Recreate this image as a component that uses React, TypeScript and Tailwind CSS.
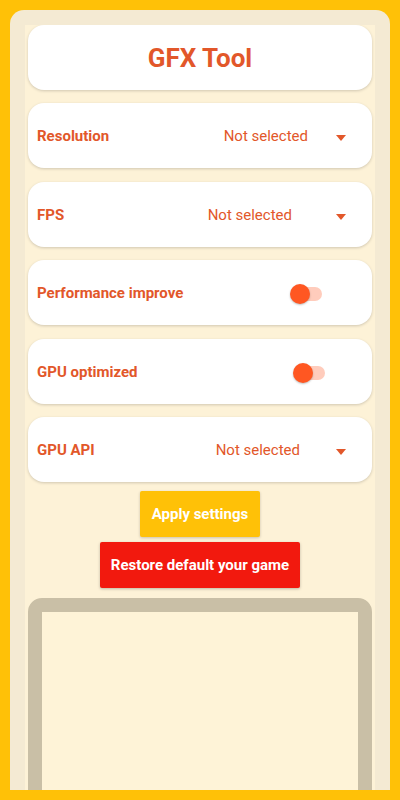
const font = { fontFamily: "Roboto, 'Noto Sans', sans-serif" };

const Arrow = () => (
  <svg width="10" height="6" viewBox="0 0 10 6" className="shrink-0 mt-[2px]">
    <path d="M0 0 L10 0 L5 6 Z" fill="#E2572A" />
  </svg>
);

const SelectCard = ({ label, valueGap, className }: { label: string; valueGap: string; className: string }) => (
  <div className={`h-[65px] shrink-0 bg-white rounded-[16px] shadow-[0_1px_3px_rgba(0,0,0,0.18)] flex items-center pl-[9px] pr-[26px] pt-[2px] ${className}`}>
    <span className="text-[15px] font-bold text-[#E2572A]">{label}</span>
    <span className="flex-1" />
    <span className={`text-[15px] text-[#E2572A] ${valueGap}`}>Not selected</span>
    <Arrow />
  </div>
);

const SwitchCard = ({ label, knobLeft, className }: { label: string; knobLeft: string; className: string }) => (
  <div className={`h-[65px] shrink-0 bg-white rounded-[16px] shadow-[0_1px_3px_rgba(0,0,0,0.18)] flex items-center pl-[9px] pt-[2px] ${className}`}>
    <span className="text-[15px] font-bold text-[#E2572A]">{label}</span>
    <span className="flex-1" />
    <div className={`relative w-[32px] h-[20px] ${knobLeft}`}>
      <div className="absolute left-[3px] right-0 top-[3px] h-[14px] rounded-full bg-[#FFCCBC]" />
      <div className="absolute left-0 top-0 w-[20px] h-[20px] rounded-full bg-[#FF5722] shadow-[0_1px_2px_rgba(0,0,0,0.25)]" />
    </div>
  </div>
);

export default function App() {
  return (
    <div className="w-[400px] h-[800px] bg-[#FFC107] pt-[10px] px-[10px] pb-[10px]" style={font}>
      <div className="h-full rounded-t-[14px] overflow-hidden bg-[#F4EAD3] pt-[15px] px-[15px]">
        <div className="h-full bg-[#FDF2D7] px-[3px] flex flex-col overflow-hidden">
          <div className="h-[65px] shrink-0 bg-white rounded-[16px] shadow-[0_1px_3px_rgba(0,0,0,0.18)] flex items-center justify-center pt-[2px]">
            <h1 className="text-[26px] font-bold text-[#E2572A]">GFX Tool</h1>
          </div>
          <SelectCard label="Resolution" valueGap="mr-[28px]" className="mt-[13px]" />
          <SelectCard label="FPS" valueGap="mr-[44px]" className="mt-[14px]" />
          <SwitchCard label="Performance improve" knobLeft="mr-[50px]" className="mt-[13px]" />
          <SwitchCard label="GPU optimized" knobLeft="mr-[47px]" className="mt-[14px]" />
          <SelectCard label="GPU API" valueGap="mr-[36px]" className="mt-[13px]" />
          <div className="flex flex-col items-center shrink-0">
            <button className="mt-[9px] w-[120px] h-[46px] bg-[#FFC107] rounded-[2px] shadow-[0_1px_3px_rgba(0,0,0,0.2)] text-white text-[15px] font-bold">
              Apply settings
            </button>
            <button className="mt-[5px] w-[200px] h-[46px] bg-[#F2190E] rounded-[2px] shadow-[0_1px_3px_rgba(0,0,0,0.25)] text-white text-[15px] font-bold">
              Restore default your game
            </button>
          </div>
          <div className="mt-[10px] flex-1 min-h-[220px] shrink-0 rounded-t-[14px] border-[14px] border-[#C9BFA6] bg-[#FEF3D7]" />
        </div>
      </div>
    </div>
  );
}
